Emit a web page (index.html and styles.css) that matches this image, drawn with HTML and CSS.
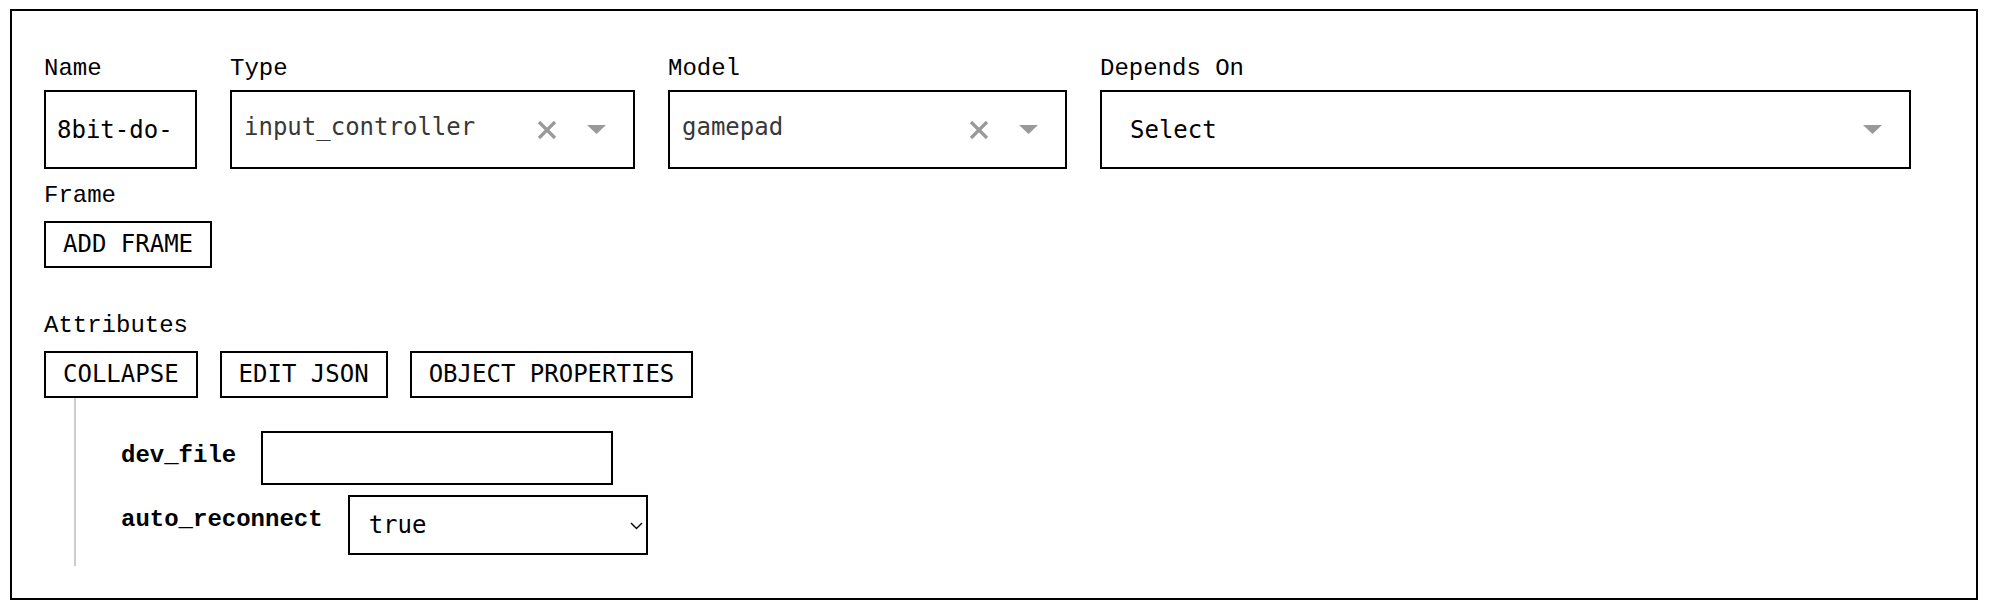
FILE: index.html
```html
<!DOCTYPE html>
<html lang="en">
<head>
<meta charset="utf-8">
<title>Component config</title>
<link rel="stylesheet" href="styles.css">
</head>
<body>
<div class="panel">
  <div class="fields">
    <div class="field f-name">
      <label class="label">Name</label>
      <input class="text-input" type="text" value="8bit-do-">
    </div>
    <div class="field f-type">
      <label class="label">Type</label>
      <div class="rselect">
        <div class="rs-value">input_controller</div>
        <span class="rs-ind"><svg width="20" height="20" viewBox="0 0 20 20"><path d="M2 2 L18 18 M18 2 L2 18" stroke="#999" stroke-width="3.2" fill="none"/></svg></span>
        <span class="rs-ind"><svg width="19" height="9" viewBox="0 0 19 9"><polygon points="0,0 19,0 9.5,9" fill="#999"/></svg></span>
      </div>
    </div>
    <div class="field f-model">
      <label class="label">Model</label>
      <div class="rselect">
        <div class="rs-value">gamepad</div>
        <span class="rs-ind"><svg width="20" height="20" viewBox="0 0 20 20"><path d="M2 2 L18 18 M18 2 L2 18" stroke="#999" stroke-width="3.2" fill="none"/></svg></span>
        <span class="rs-ind"><svg width="19" height="9" viewBox="0 0 19 9"><polygon points="0,0 19,0 9.5,9" fill="#999"/></svg></span>
      </div>
    </div>
    <div class="field f-depends">
      <label class="label">Depends On</label>
      <div class="rselect">
        <div class="rs-value rs-placeholder">Select</div>
        <span class="rs-ind"><svg width="19" height="9" viewBox="0 0 19 9"><polygon points="0,0 19,0 9.5,9" fill="#999"/></svg></span>
      </div>
    </div>
  </div>

  <div class="group group-frame">
    <div class="label group-label">Frame</div>
    <div class="btn-row">
      <button class="btn" type="button">Add Frame</button>
    </div>
  </div>

  <div class="group group-attrs">
    <div class="label group-label">Attributes</div>
    <div class="btn-row">
      <button class="btn" type="button">Collapse</button>
      <button class="btn" type="button">Edit JSON</button>
      <button class="btn" type="button">Object Properties</button>
    </div>
    <div class="tree">
      <div class="attr-row">
        <span class="attr-key">dev_file</span>
        <input class="attr-input" type="text" value="">
      </div>
      <div class="attr-row">
        <span class="attr-key">auto_reconnect</span>
        <div class="native-select">
          <select class="attr-select">
            <option>true</option>
            <option>false</option>
          </select>
          <svg class="chev" width="13" height="8" viewBox="0 0 13 8"><path d="M1 1 L6.5 6.5 L12 1" stroke="#000" stroke-width="1.4" fill="none"/></svg>
        </div>
      </div>
    </div>
  </div>
</div>
</body>
</html>
```

FILE: styles.css
```css
html, body {
  margin: 0;
  padding: 0;
  background: #fff;
  overflow: hidden;
}

body {
  font-family: "DejaVu Sans Mono", "Liberation Mono", monospace;
  font-size: 24px;
  color: #000;
}

.panel {
  margin: 9px 14px 14px 10px;
  border: 2px solid #000;
  padding: 44px 32px 32px 32px;
  height: 591px;
  box-sizing: border-box;
}

.label {
  display: block;
  font-family: "Liberation Mono", monospace;
  font-size: 24px;
  line-height: 27px;
  margin-bottom: 8px;
  color: #000;
}

.group-label {
  margin-bottom: 12px;
}

.fields {
  display: flex;
  gap: 33px;
}

.field {
  display: flex;
  flex-direction: column;
}

.f-name { width: 153px; }
.f-type { width: 405px; }
.f-model { width: 399px; }
.f-depends { width: 811px; }

.text-input {
  box-sizing: border-box;
  width: 100%;
  height: 79px;
  border: 2px solid #000;
  border-radius: 0;
  padding: 0 11px;
  font-family: "DejaVu Sans Mono", monospace;
  font-size: 24px;
  color: #000;
  background: #fff;
  outline: none;
}

.rselect {
  box-sizing: border-box;
  height: 79px;
  border: 2px solid #000;
  display: flex;
  align-items: center;
  padding-right: 12.5px;
  background: #fff;
}

.rs-value {
  flex: 1;
  padding-left: 12px;
  padding-bottom: 5px;
  color: #383838;
  white-space: nowrap;
  overflow: hidden;
  font-size: 24px;
  line-height: 28px;
}

.rs-placeholder {
  color: #000;
  padding-left: 28px;
  padding-bottom: 0;
}

.rs-ind {
  width: 49px;
  display: flex;
  align-items: center;
  justify-content: center;
}

.group-frame {
  margin-top: 13px;
}

.group-attrs {
  margin-top: 44px;
}

.btn-row {
  display: flex;
  gap: 22px;
}

.btn {
  box-sizing: border-box;
  height: 47px;
  border: 2px solid #000;
  border-radius: 0;
  background: #fff;
  padding: 0 17px;
  font-family: "DejaVu Sans Mono", monospace;
  font-size: 24px;
  line-height: 27px;
  text-transform: uppercase;
  color: #000;
  margin: 0;
}

.tree {
  margin-left: 30px;
  border-left: 2px solid #cccccc;
  padding: 33px 0 11px 45px;
  display: flex;
  flex-direction: column;
  gap: 10px;
}

.attr-row {
  display: flex;
  align-items: flex-start;
  gap: 25px;
}

.attr-key {
  font-family: "Liberation Mono", monospace;
  font-weight: bold;
  font-size: 24px;
  line-height: 27px;
  margin-top: 11px;
}

.attr-input {
  box-sizing: border-box;
  width: 352px;
  height: 54px;
  border: 2px solid #000;
  border-radius: 0;
  padding: 0 12px;
  font-family: "DejaVu Sans Mono", monospace;
  font-size: 24px;
  background: #fff;
  outline: none;
}

.native-select {
  position: relative;
  width: 300px;
  height: 60px;
}

.attr-select {
  -webkit-appearance: none;
  appearance: none;
  box-sizing: border-box;
  width: 100%;
  height: 100%;
  border: 2px solid #000;
  border-radius: 0;
  background: #fff;
  padding: 0 30px 0 19px;
  font-family: "DejaVu Sans Mono", monospace;
  font-size: 24px;
  color: #000;
  outline: none;
}

.chev {
  position: absolute;
  right: 5px;
  top: 27px;
  pointer-events: none;
}
```
